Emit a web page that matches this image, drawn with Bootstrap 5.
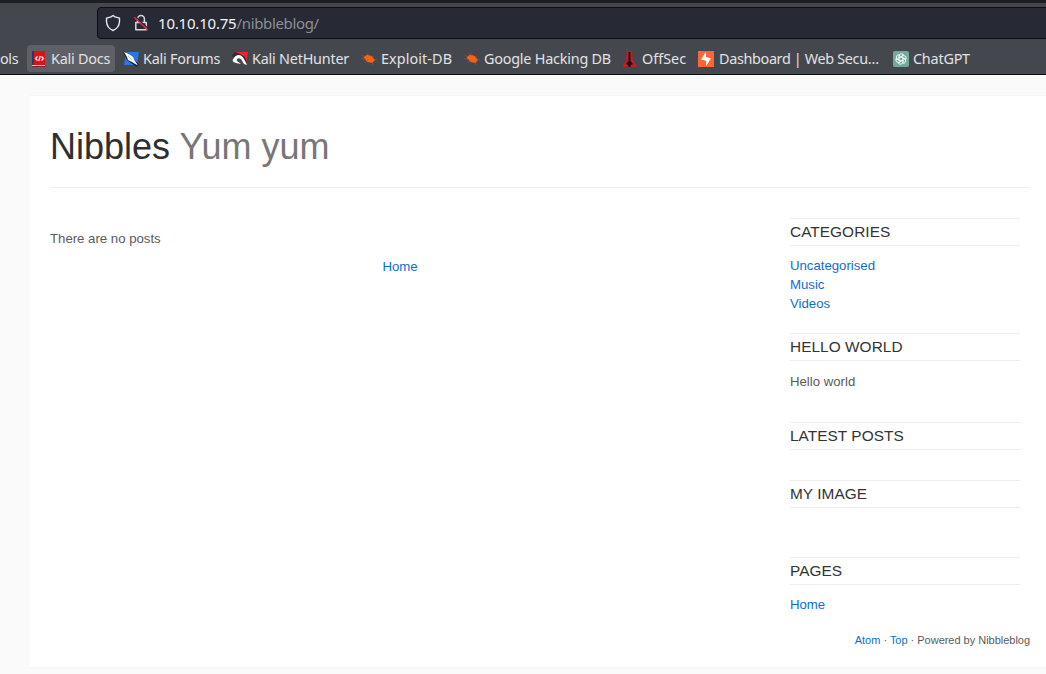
<!DOCTYPE html>
<html lang="en">
<head>
<meta charset="utf-8">
<title>Nibbles - Yum yum</title>
<meta name="viewport" content="width=device-width, initial-scale=1">
<link href="https://cdn.jsdelivr.net/npm/bootstrap@5.3.0/dist/css/bootstrap.min.css" rel="stylesheet">
<style>
body{background:#fafafa;font:13.2px/19px "Liberation Sans",Arial,sans-serif;color:#5a5a5a;overflow:hidden;height:674px}
a{color:#0b6fce;text-decoration:none}
.browser{height:75px;background:#45474f;border-top:3px solid #1c1e23;border-bottom:1px solid #0c0c0e;font-family:"Noto Sans",sans-serif;color:#e2e2e4}
.address{height:32px;margin:4px -6px 0 97px;background:#272934;border:1px solid #0e0f14;border-radius:4px;font-size:15px;padding-left:7px;color:#f4f4f6}
.address .url{letter-spacing:-.2px;margin-left:9px}
.address .path{color:#8e8f98;letter-spacing:-.35px}
.lock{margin-left:12px}
.bookmarks{height:27px;margin-top:6px;font-size:14.4px}
.bm{height:27px;border-radius:4px;white-space:nowrap}
.bm svg{width:16px;height:16px;flex:none;margin-right:4px}
.bm.current{background:#5f6067}
.tight{letter-spacing:-.22px}
.tighter{letter-spacing:-.34px}
.loose{letter-spacing:.08px}
.sheet{width:1020px;height:573px;margin:20px 0 0 30px;padding:0 20px;background:#fff;border:1px solid #f5f5f5;border-width:1px 0 1px 0}
.masthead{height:92px;padding-top:31px;border-bottom:1px solid #eee}
.masthead h1{font-size:36px;line-height:40px;font-weight:400;color:#2f2f2f;margin:0}
.masthead h1 span{color:#777}
.posts{width:700px;padding-top:41px}
.side{width:230px;margin:30px 10px 0 0;height:406px}
.side h2{font-size:15.4px;letter-spacing:.05px;line-height:26px;height:28px;font-weight:400;color:#333;text-transform:uppercase;border:solid #eee;border-width:1px 0;margin:0 0 10px}
.foot{font-size:11px;letter-spacing:-.02px;line-height:16px;margin-top:8px}
</style>
</head>
<body>
<header class="browser">
  <div class="address d-flex align-items-center">
    <svg width="16" height="18" viewBox="0 0 16 18" fill="none" stroke="#e8e8ec" stroke-width="1.4" stroke-linejoin="round"><path d="M8 1.5 10 2.8 14.5 4.2V7.5C14.3 11.5 12.3 14.7 8 16.5 3.7 14.7 1.7 11.5 1.5 7.5V4.2L6 2.8Z"/></svg>
    <svg class="lock" width="16" height="18" viewBox="0 0 16 18" fill="none"><path d="M4.6 8V5a3.4 3.4 0 0 1 6.8 0V8M2.8 8.5H13.3V15.8H2.8Z" stroke="#d8d8dd" stroke-width="1.5" stroke-linejoin="round"/><path d="M2 2.2 15.6 15" stroke="#272934" stroke-width="1.4"/><path d="M1.2 3.2 14.8 16" stroke="#e22850" stroke-width="1.4"/></svg>
    <span class="url"><span>10.10.10.75</span><span class="path">/nibbleblog/</span></span>
  </div>
  <nav class="bookmarks d-flex align-items-center">
    <div class="bm d-flex align-items-center" style="width:27px"><span class="tighter">ols</span></div>
    <div class="bm current d-flex align-items-center" style="width:88px;padding-left:4px"><svg viewBox="0 0 16 16"><path d="M1 0h13v14H1z" fill="#d9131b"/><path d="M1 0h2v14H1z" fill="#26396c"/><path d="M1 14h13v1H1z" fill="#d8c5c6"/><path d="M1 15h13v1H1z" fill="#8c2028"/><path d="m6.5 5.5-2 2 2 2m4-4 2 2-2 2M9.3 5 7.7 10" stroke="#fff" stroke-width="1.2" fill="none"/></svg><span class="tight">Kali Docs</span></div>
    <div class="bm d-flex align-items-center" style="width:109px;padding-left:8px"><svg viewBox="0 0 16 16"><path d="M3 1h13l-2 13H1Z" fill="#2678e2"/><path d="M0 1 5 2 11 8 16 14 14 16 8 12 4 9Z" fill="#20242d"/><path d="M1 1 6 3 10 6 12 10 15 14.5 9 11 5 9 4 6Z" fill="#fff"/><path d="m5 5 4 4" stroke="#9db4cf" stroke-width=".8"/></svg><span class="tight">Kali Forums</span></div>
    <div class="bm d-flex align-items-center" style="width:129px;padding-left:8px"><svg viewBox="0 0 16 16"><path d="M2 1h14l-2 12L9 6Z" fill="#ef252d"/><path d="M0 5 3 1 8 3 13 6 15 12 12 9 8 6 3 7Z" fill="#2b2c34"/><path d="M2 7C5 2 10 4 12 8l3 6-3-1-3-5C6 6 4 8 5 10l4 3-5-1C0 11 0 9 2 7Z" fill="#fff"/></svg><span class="tight">Kali NetHunter</span></div>
    <div class="bm d-flex align-items-center" style="width:103px;padding-left:8px"><svg viewBox="0 0 16 16"><path d="m2.5 6 4-2.5 4 1.5 3.5 4-2.5 3-5-1-3-3Z" fill="#f06414"/><path d="m1 4 3 2M0 7.5l5 1M4 12l3-3M6 2l2 3m3 0 2 1m0 3 3-1m-5 3 1 3" stroke="#985037" stroke-width=".7" fill="none"/></svg><span class="loose">Exploit-DB</span></div>
    <div class="bm d-flex align-items-center" style="width:158px;padding-left:8px"><svg viewBox="0 0 16 16"><path d="m2.5 6 4-2.5 4 1.5 3.5 4-2.5 3-5-1-3-3Z" fill="#f06414"/><path d="m1 4 3 2M0 7.5l5 1M4 12l3-3M6 2l2 3m3 0 2 1m0 3 3-1m-5 3 1 3" stroke="#985037" stroke-width=".7" fill="none"/></svg><span class="tight">Google Hacking DB</span></div>
    <div class="bm d-flex align-items-center" style="width:76px;padding-left:8px"><svg viewBox="0 0 16 16"><path d="M4.5 0h6v9l4 5v2H1v-2l3.5-5Z" fill="#c91924"/><path d="M6.5 1h2v9l2.5 3-2 1-.5 2h-2L6 14l-2-1 2.5-3Z" fill="#250f16"/></svg><span>OffSec</span></div>
    <div class="bm d-flex align-items-center" style="width:195px;padding-left:8px"><svg style="margin-right:5px" viewBox="0 0 16 16"><path d="M0 0h16v16H0z" fill="#ff6633"/><path d="M8 .8V6l5 1.2L8.2 15V9.8L3 8.4Z" fill="#fff"/></svg><span class="tighter">Dashboard | Web Secu…</span></div>
    <div class="bm d-flex align-items-center" style="padding-left:8px"><svg viewBox="0 0 16 16"><rect width="16" height="16" rx="2" fill="#74aa9c"/><g fill="none" stroke="#f5fffb" stroke-width=".9"><path id="petal" d="M6.1 9.2V5.1a2.5 2.5 0 0 1 4.7-1L7.2 6.2"/><use href="#petal" transform="rotate(60 8 8)"/><use href="#petal" transform="rotate(120 8 8)"/><use href="#petal" transform="rotate(180 8 8)"/><use href="#petal" transform="rotate(240 8 8)"/><use href="#petal" transform="rotate(300 8 8)"/></g></svg><span class="tight">ChatGPT</span></div>
  </nav>
</header>
<div class="sheet">
  <header class="masthead"><h1>Nibbles <span>Yum yum</span></h1></header>
  <div class="d-flex justify-content-between">
    <main class="posts"><p class="mb-0">There are no posts</p><p class="text-center mb-0" style="margin-top:9px"><a href="#">Home</a></p></main>
    <aside class="side">
      <section style="height:115px"><h2>Categories</h2><ul class="list-unstyled mb-0"><li><a href="#">Uncategorised</a></li><li><a href="#">Music</a></li><li><a href="#">Videos</a></li></ul></section>
      <section style="height:89px"><h2>Hello world</h2><p class="mb-0" style="padding-top:1px">Hello world</p></section>
      <section style="height:58px"><h2>Latest posts</h2></section>
      <section style="height:77px"><h2>My image</h2></section>
      <section><h2>Pages</h2><a href="#">Home</a></section>
    </aside>
  </div>
  <footer class="foot text-end"><a href="#">Atom</a> · <a href="#">Top</a> · Powered by Nibbleblog</footer>
</div>
<script src="https://cdn.jsdelivr.net/npm/bootstrap@5.3.0/dist/js/bootstrap.bundle.min.js"></script>
</body>
</html>
